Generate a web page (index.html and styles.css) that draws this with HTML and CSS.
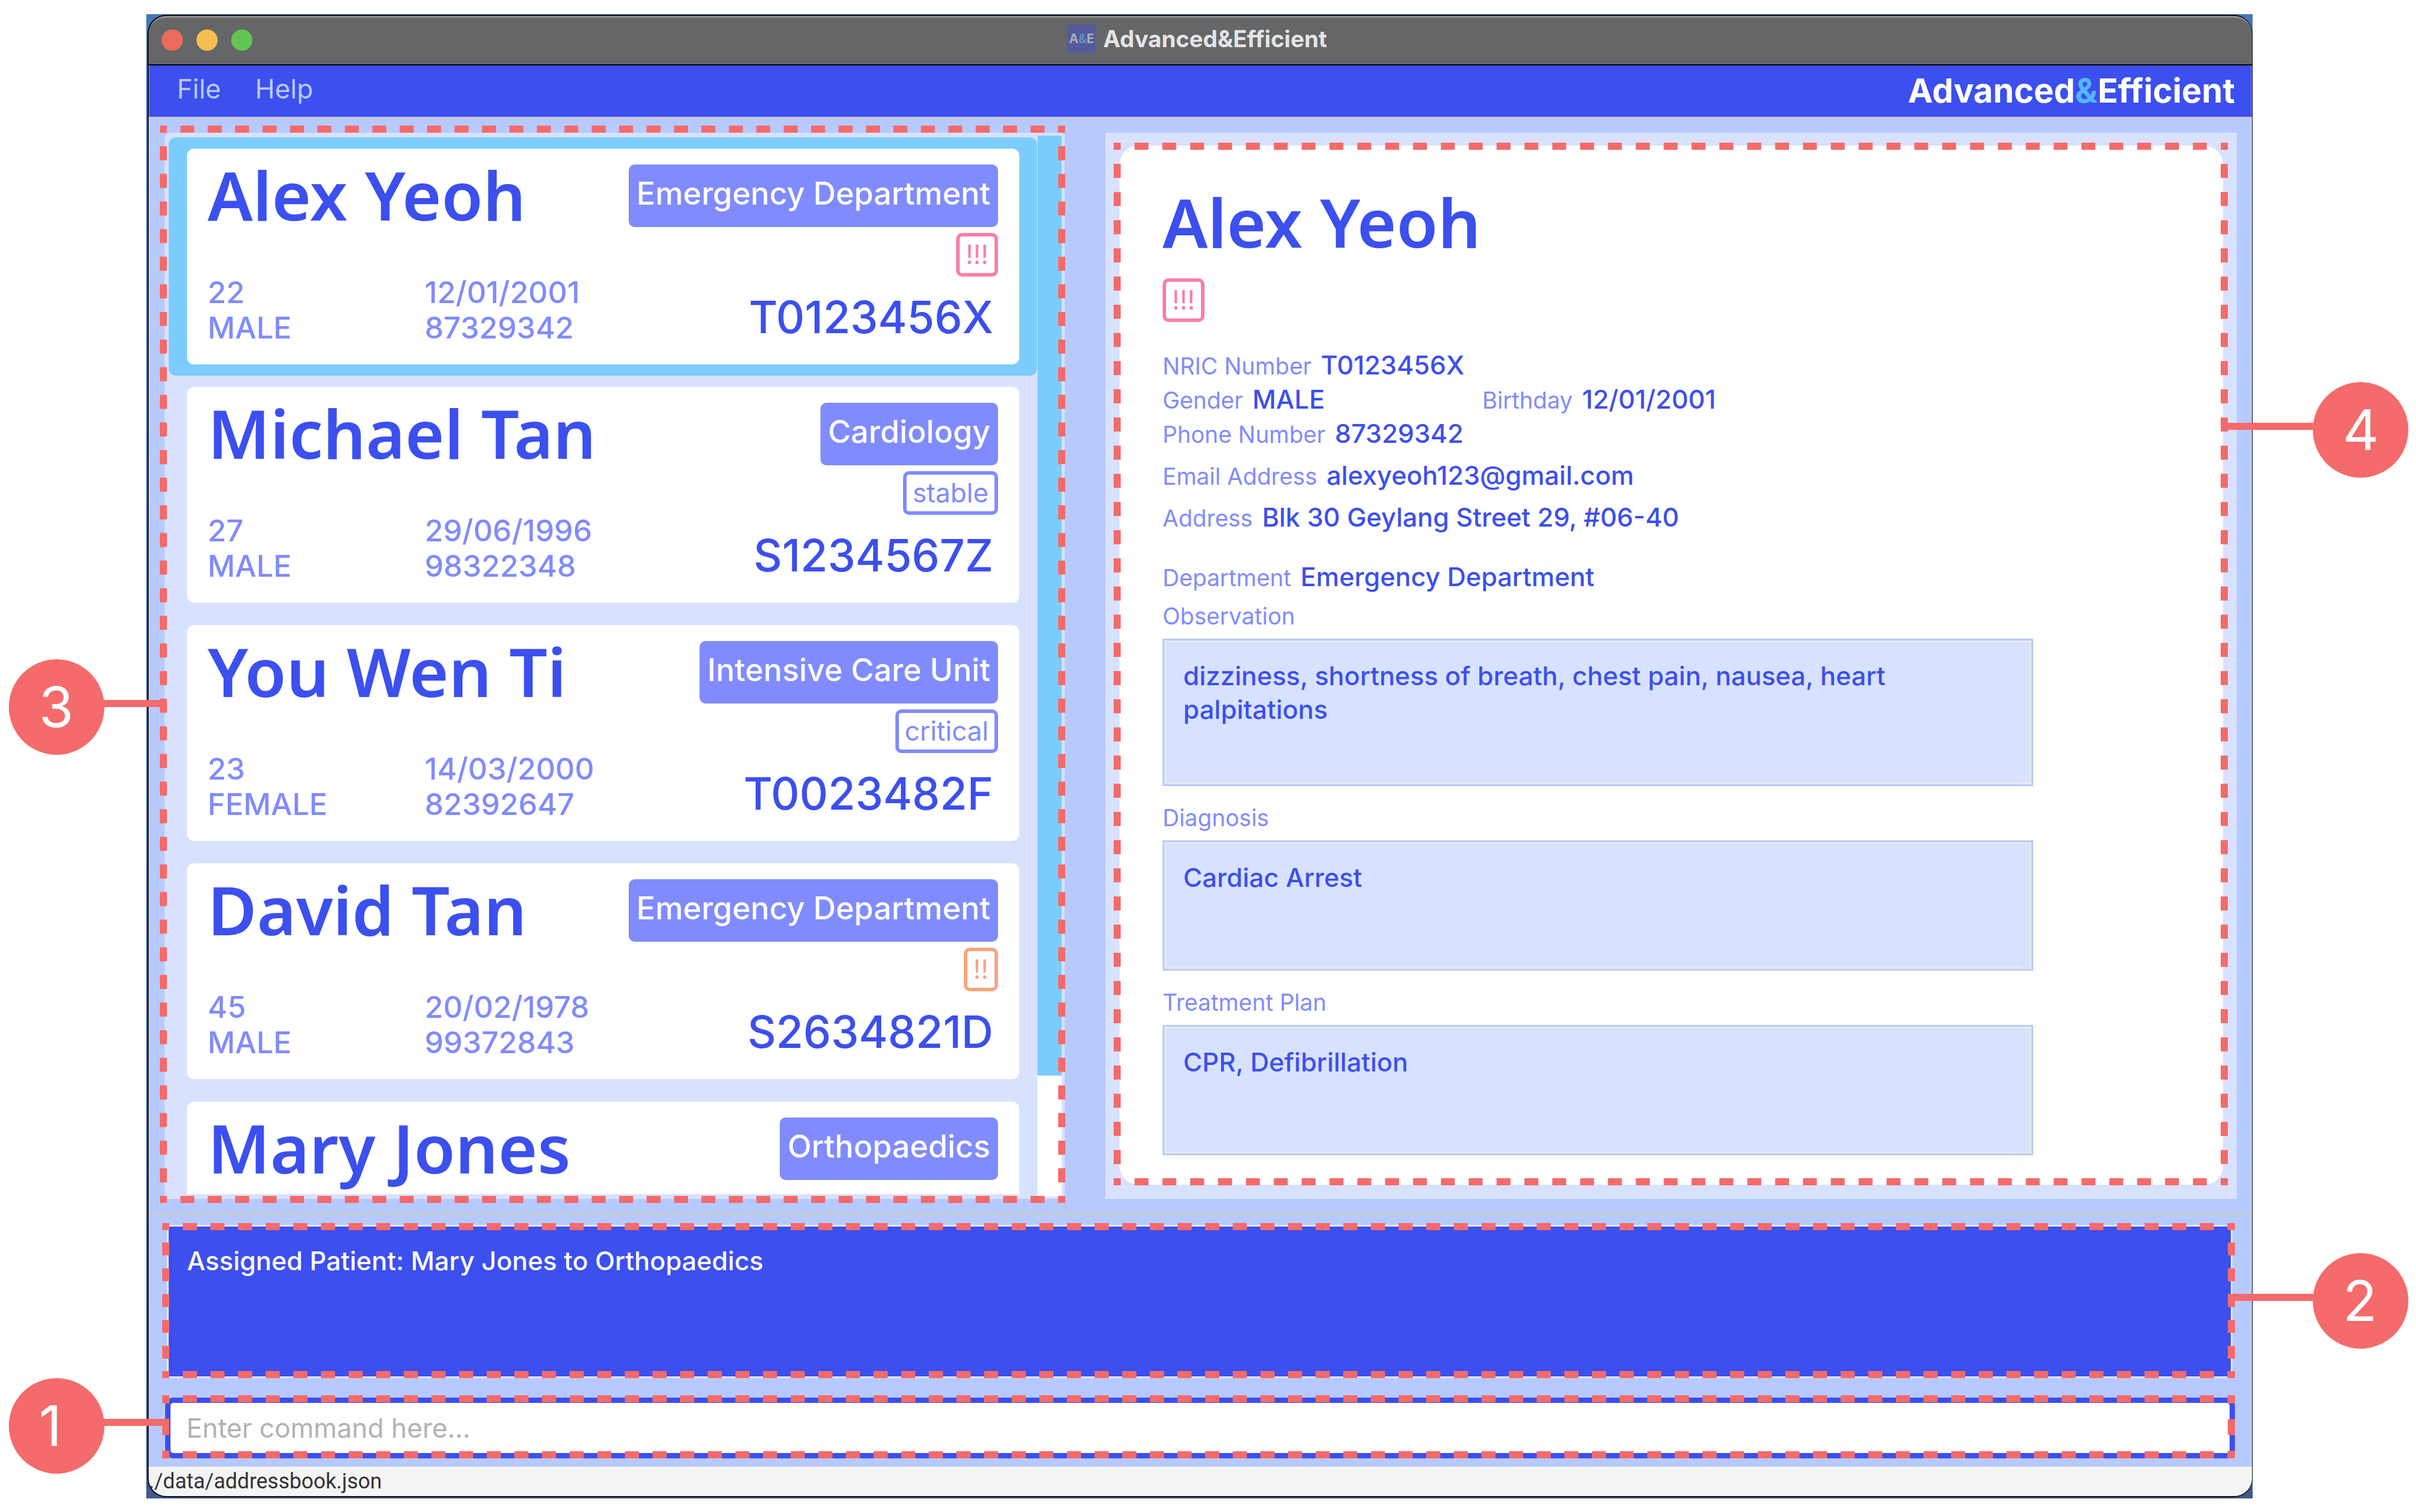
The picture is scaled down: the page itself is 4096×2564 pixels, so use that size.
FILE: index.html
```
<!DOCTYPE html>
<html lang="en">
<head>
<meta charset="utf-8">
<title>Advanced&amp;Efficient</title>
<link rel="stylesheet" href="styles.css">
</head>
<body>
<div class="desktop">
  <div class="window">
    <header class="titlebar">
      <div class="lights">
        <span class="light light-close"></span>
        <span class="light light-minimise"></span>
        <span class="light light-zoom"></span>
      </div>
      <div class="title">
        <span class="app-icon">A<span class="app-icon-amp">&amp;</span>E</span>
        <span>Advanced&amp;Efficient</span>
      </div>
    </header>

    <nav class="menubar">
      <button class="menu" type="button">File</button>
      <button class="menu" type="button">Help</button>
      <span class="brand">Advanced<span class="brand-amp">&amp;</span>Efficient</span>
    </nav>

    <main class="workspace">
      <section class="panel list-panel">
        <ul class="patients">
          <li class="patient selected">
            <article class="card">
              <div class="card-main">
                <h2 class="name">Alex Yeoh</h2>
                <div class="facts"><span>22</span><span>12/01/2001</span><span>MALE</span><span>87329342</span></div>
              </div>
              <div class="card-side">
                <span class="department">Emergency Department</span>
                <span class="tag tag-high">!!!</span>
                <span class="nric">T0123456X</span>
              </div>
            </article>
          </li>
          <li class="patient">
            <article class="card">
              <div class="card-main">
                <h2 class="name">Michael Tan</h2>
                <div class="facts"><span>27</span><span>29/06/1996</span><span>MALE</span><span>98322348</span></div>
              </div>
              <div class="card-side">
                <span class="department">Cardiology</span>
                <span class="tag">stable</span>
                <span class="nric">S1234567Z</span>
              </div>
            </article>
          </li>
          <li class="patient">
            <article class="card">
              <div class="card-main">
                <h2 class="name">You Wen Ti</h2>
                <div class="facts"><span>23</span><span>14/03/2000</span><span>FEMALE</span><span>82392647</span></div>
              </div>
              <div class="card-side">
                <span class="department">Intensive Care Unit</span>
                <span class="tag">critical</span>
                <span class="nric">T0023482F</span>
              </div>
            </article>
          </li>
          <li class="patient">
            <article class="card">
              <div class="card-main">
                <h2 class="name">David Tan</h2>
                <div class="facts"><span>45</span><span>20/02/1978</span><span>MALE</span><span>99372843</span></div>
              </div>
              <div class="card-side">
                <span class="department">Emergency Department</span>
                <span class="tag tag-medium">!!</span>
                <span class="nric">S2634821D</span>
              </div>
            </article>
          </li>
          <li class="patient">
            <article class="card">
              <div class="card-main">
                <h2 class="name">Mary Jones</h2>
              </div>
              <div class="card-side">
                <span class="department">Orthopaedics</span>
              </div>
            </article>
          </li>
        </ul>
        <div class="scrollbar"><div class="scrollbar-thumb"></div></div>
        <div class="frame frame-list">
          <div class="callout callout-left callout-list"><span class="callout-number">3</span></div>
        </div>
      </section>

      <section class="panel detail-panel">
        <div class="detail">
          <h1 class="name">Alex Yeoh</h1>
          <span class="tag tag-high detail-tag">!!!</span>
          <dl class="fields">
            <div class="field"><dt>NRIC Number</dt><dd>T0123456X</dd></div>
            <div class="field-pair">
              <div class="field"><dt>Gender</dt><dd>MALE</dd></div>
              <div class="field"><dt>Birthday</dt><dd>12/01/2001</dd></div>
            </div>
            <div class="field"><dt>Phone Number</dt><dd>87329342</dd></div>
            <div class="field field-spaced"><dt>Email Address</dt><dd>alexyeoh123@gmail.com</dd></div>
            <div class="field field-spaced"><dt>Address</dt><dd>Blk 30 Geylang Street 29, #06-40</dd></div>
            <div class="field field-section"><dt>Department</dt><dd>Emergency Department</dd></div>
          </dl>
          <div class="note note-first">
            <label for="observation">Observation</label>
            <textarea id="observation" class="note-box note-tall" readonly>dizziness, shortness of breath, chest pain, nausea, heart palpitations</textarea>
          </div>
          <div class="note">
            <label for="diagnosis">Diagnosis</label>
            <textarea id="diagnosis" class="note-box" readonly>Cardiac Arrest</textarea>
          </div>
          <div class="note">
            <label for="treatment">Treatment Plan</label>
            <textarea id="treatment" class="note-box" readonly>CPR, Defibrillation</textarea>
          </div>
        </div>
        <div class="frame frame-detail">
          <div class="callout callout-right callout-detail"><span class="callout-number">4</span></div>
        </div>
      </section>
    </main>

    <section class="console">
      <div class="result">
        <textarea class="result-text" aria-label="Result" readonly>Assigned Patient: Mary Jones to Orthopaedics</textarea>
        <div class="frame frame-result">
          <div class="callout callout-right callout-result"><span class="callout-number">2</span></div>
        </div>
      </div>
      <div class="command">
        <input class="command-input" type="text" aria-label="Command" placeholder="Enter command here...">
        <div class="frame frame-command">
          <div class="callout callout-left callout-command"><span class="callout-number">1</span></div>
        </div>
      </div>
    </section>

    <footer class="statusbar">./data/addressbook.json</footer>
  </div>
</div>
</body>
</html>
```

FILE: styles.css
```
:root {
  --blue: #3c4fef;
  --violet: #808bff;
  --sky: #7ccdff;
  --pale: #d8e2ff;
  --mist: #b7caff;
  --coral: #f56a6a;
  --pink: #f87fa9;
  --orange: #f8a57f;
}

* { box-sizing: border-box; }

body {
  margin: 0;
  height: 100vh;
  padding: 24px 277px 23px 248px;
  background: #fff;
  font-family: Inter, "Liberation Sans", sans-serif;
  font-size: 44px;
  font-weight: 500;
  color: var(--blue);
}

h1, h2, ul, dl, dd { margin: 0; padding: 0; }
ul { list-style: none; }

button, input, textarea {
  font: inherit;
  margin: 0;
  border: 0;
  border-radius: 0;
  outline: 0;
  resize: none;
}

.desktop {
  height: 100%;
  padding: 1px 0 2px 2px;
  background: linear-gradient(#4a76b8, #3f5a8c);
}

.window {
  height: 100%;
  display: flex;
  flex-direction: column;
  border: 2px solid #0c0c10;
  border-right-width: 1px;
  border-radius: 32px;
  background: #0c0c10;
}

/* Title bar */

.titlebar {
  display: grid;
  grid-template-columns: 1fr auto 1fr;
  align-items: center;
  height: 84px;
  padding: 0 22px 3px;
  border-top: 3px solid #8f9092;
  border-bottom: 2px solid #000;
  border-radius: 30px 30px 0 0;
  background: #656668;
}

.lights { display: flex; gap: 23px; }
.light { width: 36px; height: 36px; border-radius: 50%; }
.light-close { background: #ec6a5e; }
.light-minimise { background: #f4bf4f; }
.light-zoom { background: #61c554; }

.title {
  display: flex;
  align-items: center;
  gap: 13px;
  padding: 0 10px 6px 0;
  font-size: 39px;
  font-weight: 700;
  color: #e4e4e4;
}

.app-icon {
  width: 47px;
  height: 47px;
  background: #555a9e;
  font-size: 21px;
  line-height: 47px;
  text-align: center;
  color: #adaeb4;
}
.app-icon-amp { color: #5f8fb4; }

/* Menu bar */

.menubar {
  display: flex;
  align-items: center;
  gap: 58px;
  height: 87px;
  padding: 0 27px 0 46px;
  border: solid #5f6ff2;
  border-width: 0 2px;
  background: var(--blue);
}

.menu {
  padding: 0 0 8px;
  background: none;
  font-size: 45px;
  font-weight: 400;
  color: var(--mist);
}

.brand {
  margin-left: auto;
  padding-bottom: 2px;
  font-size: 57px;
  font-weight: 700;
  color: #fff;
}
.brand-amp { color: #54b6ff; }

/* Two panels */

.workspace {
  flex: 1;
  min-height: 0;
  display: grid;
  grid-template-columns: minmax(0, 1526fr) minmax(0, 1918fr);
  grid-template-rows: minmax(0, 1fr);
  gap: 69px;
  padding: 24px 24px 24px 25px;
  border: solid #c8c9cc;
  border-width: 3px 2px;
  background: var(--mist);
}

.panel { position: relative; background: var(--pale); }

.list-panel { display: flex; border-radius: 8px 8px 0 0; }

.patients {
  flex: 1;
  margin: 8px 1px 8px 7px;
  overflow: hidden;
}

.patient {
  height: 404px;
  padding: 19px 30px 19px 31px;
  border-radius: 12px;
}
.selected { background: var(--sky); }

.card {
  display: flex;
  justify-content: space-between;
  height: 366px;
  padding: 27px 36px 0 35px;
  border-radius: 12px;
  background: #fff;
}

.name {
  font-family: "Noto Sans", "Open Sans", sans-serif;
  font-size: 114px;
  font-weight: 600;
  line-height: 102px;
  white-space: nowrap;
}

.facts {
  display: grid;
  grid-template-columns: 368px auto;
  margin-top: 85px;
  font-size: 51px;
  line-height: 60px;
  color: var(--violet);
}

.card-side {
  display: flex;
  flex-direction: column;
  align-items: flex-end;
}

.department {
  height: 106px;
  padding: 0 13px 8px;
  border-radius: 10px;
  background: var(--violet);
  font-size: 53px;
  line-height: 98px;
  white-space: nowrap;
  color: #fff;
}

.tag {
  height: 74px;
  margin-top: 10px;
  padding: 0 10px;
  border: 6px solid currentColor;
  border-radius: 10px;
  font-size: 45px;
  font-weight: 400;
  line-height: 62px;
  color: var(--violet);
}
.tag-high { color: var(--pink); }
.tag-medium { color: var(--orange); }

.nric {
  margin: 24px 8px 0 0;
  font-size: 75px;
  line-height: 90px;
}

.scrollbar {
  width: 41px;
  margin: 5px 5px 4px 0;
  background: #fff;
}
.scrollbar-thumb { height: 88.6%; background: var(--sky); }

/* Patient detail */

.detail-panel { padding: 22px 23px 24px 24px; }

.detail {
  display: flex;
  flex-direction: column;
  align-items: stretch;
  height: 100%;
  padding: 78px 322px 0 73px;
  border-radius: 32px;
  background: #fff;
}

.detail-tag { align-self: flex-start; margin-top: 45px; }

.fields { margin-top: 44px; line-height: 58px; }
.field { display: flex; align-items: baseline; gap: 16px; height: 58px; }
.field dt, .note label { font-size: 39px; font-weight: 400; color: var(--violet); }
.field-pair { display: grid; grid-template-columns: 542px auto; }
.field-spaced { margin-top: 13px; }
.field-section { margin-top: 43px; }

.note { display: flex; flex-direction: column; margin-top: 25px; }
.note-first { margin-top: 9px; }
.note label { line-height: 58px; }

.note-box {
  height: 221px;
  margin-top: 9px;
  padding: 32px 32px;
  border: 3px solid var(--mist);
  background: var(--pale);
  box-shadow: inset 0 0 0 3px #e6e8ec;
  line-height: 57px;
  color: var(--blue);
}
.note-tall { height: 250px; }

/* Result and command boxes */

.console {
  display: flex;
  flex-direction: column;
  gap: 33px;
  padding: 17px 29px 14px 28px;
  background: var(--mist);
}

.result, .command { position: relative; display: flex; }
.result { margin: 0 4px 0 3px; }

.result-text {
  flex: 1;
  height: 260px;
  padding: 29px 31px;
  border: 3px solid #e6e8ec;
  border-radius: 6px;
  background: var(--blue);
  line-height: 58px;
  color: #fff;
}

.command-input {
  flex: 1;
  height: 103px;
  padding: 0 27px;
  border: 9px solid var(--blue);
  border-radius: 14px;
  background: #fff;
  font-size: 45px;
  font-weight: 400;
  color: var(--blue);
}
.command-input::placeholder { color: #b2b2b2; opacity: 1; }

.statusbar {
  height: 50px;
  border-radius: 0 0 30px 30px;
  background: #f4f4f4;
  font-family: Roboto, "Liberation Sans", sans-serif;
  font-size: 36px;
  font-weight: 400;
  line-height: 50px;
  color: #333;
}

/* Numbered annotations over the window */

.frame {
  --dash: 47px;
  --row: linear-gradient(90deg, var(--coral) 25%, transparent 25% 75%, var(--coral) 75%);
  --column: linear-gradient(var(--coral) 25%, transparent 25% 75%, var(--coral) 75%);
  position: absolute;
  pointer-events: none;
  background-image: var(--row), var(--row), var(--column), var(--column);
  background-position: top left, bottom left, top left, top right;
  background-size: 47px 12px, 47px 12px, 12px var(--dash), 12px var(--dash);
  background-repeat: round no-repeat, round no-repeat, no-repeat round, no-repeat round;
}
.frame-list { inset: -12px -1px -7px -8px; }
.frame-detail { --dash: 48px; inset: 17px 15px 23px 14px; }
.frame-result { inset: -3px -4px 0 -8px; }
.frame-command { inset: -4px 0 0 -5px; }

/* --reach is how far a callout extends beyond its frame */
.callout {
  position: absolute;
  display: flex;
  width: calc(var(--reach) + 12px);
}
.callout::after {
  content: "";
  position: absolute;
  top: 69px;
  height: 12px;
  background: var(--coral);
}
.callout-left { left: calc(0px - var(--reach)); }
.callout-left::after { left: 150px; right: 0; }
.callout-right { right: calc(0px - var(--reach)); justify-content: flex-end; }
.callout-right::after { left: 0; right: 150px; }

.callout-number {
  width: 162px;
  height: 162px;
  padding-left: 51px;
  border-radius: 50%;
  background: var(--coral);
  font-size: 95px;
  font-weight: 400;
  line-height: 162px;
  color: #fff;
}

.callout-list { --reach: 256px; top: 905px; }
.callout-detail { --reach: 306px; top: 406px; }
.callout-result { --reach: 294px; top: 51px; }
.callout-command { --reach: 260px; top: -29px; }
```
